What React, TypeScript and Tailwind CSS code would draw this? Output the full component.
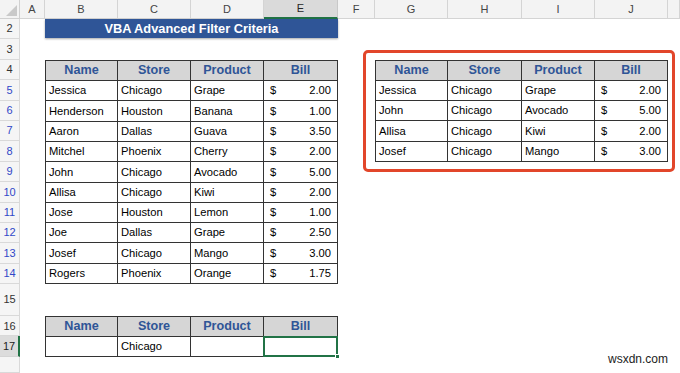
import React from "react";

const FONT = { fontFamily: '"Liberation Sans", Arial, sans-serif' };

const cols = ["A", "B", "C", "D", "E", "F", "G", "H", "I", "J", ""];

const data: [string, string, string, string][] = [
  ["Jessica", "Chicago", "Grape", "2.00"],
  ["Henderson", "Houston", "Banana", "1.00"],
  ["Aaron", "Dallas", "Guava", "3.50"],
  ["Mitchel", "Phoenix", "Cherry", "2.00"],
  ["John", "Chicago", "Avocado", "5.00"],
  ["Allisa", "Chicago", "Kiwi", "2.00"],
  ["Jose", "Houston", "Lemon", "1.00"],
  ["Joe", "Dallas", "Grape", "2.50"],
  ["Josef", "Chicago", "Mango", "3.00"],
  ["Rogers", "Phoenix", "Orange", "1.75"],
];

const filtered = data.filter((r) => r[1] === "Chicago");

function HeaderRow() {
  return (
    <>
      {["Name", "Store", "Product", "Bill"].map((h) => (
        <div
          key={h}
          className="border-r border-b border-[#333] bg-[#d6d6d6] flex items-center justify-center text-[12.6px] font-bold text-[#2f5597]"
        >
          {h}
        </div>
      ))}
    </>
  );
}

function DataRow({ r }: { r: [string, string, string, string] }) {
  return (
    <>
      <div className="border-r border-b border-[#333] flex items-center pl-[3px] text-[11.2px] text-black">{r[0]}</div>
      <div className="border-r border-b border-[#333] flex items-center pl-[3px] text-[11.2px] text-black">{r[1]}</div>
      <div className="border-r border-b border-[#333] flex items-center pl-[3px] text-[11.2px] text-black">{r[2]}</div>
      <div className="border-r border-b border-[#333] flex items-center justify-between pl-[6px] pr-[6px] text-[11.2px] text-black">
        <span>$</span>
        <span>{r[3]}</span>
      </div>
    </>
  );
}

export default function App() {
  const rowNums: { n: number; cls: string }[] = [];
  for (let n = 2; n <= 18; n++) {
    let color = "text-[#333]";
    if (n >= 5 && n <= 14) color = "text-[#3048c8]";
    rowNums.push({ n, cls: color });
  }

  return (
    <div
      className="w-[680px] h-[373px] overflow-hidden bg-white relative grid"
      style={{
        ...FONT,
        gridTemplateColumns: "20px 25px 73px 73px 73px 74px 37px 73px 74px 73px 73px 1fr",
        gridTemplateRows: "19px repeat(13, 20.4px) 32px 20.4px 20.4px 1fr",
      }}
    >
      {/* corner */}
      <div className="col-start-1 row-start-1 bg-[#f3f3f3] border-r border-b border-[#d0d0d0] relative">
        <div className="absolute right-[2px] bottom-[2px] w-0 h-0 border-l-[11px] border-l-transparent border-b-[11px] border-b-[#c9c9c9]" />
      </div>
      {/* column headers */}
      {cols.map((c, i) => (
        <div
          key={i}
          className={
            c === "E"
              ? "row-start-1 bg-[#dadada] border-r border-[#c8c8c8] border-b-2 border-b-[#217346] flex items-center justify-center text-[11px] text-[#262626]"
              : "row-start-1 bg-[#f3f3f3] border-r border-b border-[#d4d4d4] flex items-center justify-center text-[11px] text-[#444]"
          }
          style={{ gridColumnStart: i + 2 }}
        >
          {c}
        </div>
      ))}
      {/* row headers */}
      {rowNums.map(({ n, cls }) => (
        <div
          key={n}
          className={
            n === 17
              ? "col-start-1 bg-[#dcdcdc] border-r-2 border-r-[#217346] border-b border-b-[#d4d4d4] flex items-center justify-center text-[11px] text-[#222]"
              : `col-start-1 bg-[#f5f5f5] border-r border-b border-[#d9d9d9] flex items-center justify-center text-[11px] ${cls}`
          }
          style={{ gridRowStart: n }}
        >
          {n === 18 ? "" : n}
        </div>
      ))}

      {/* title */}
      <div className="col-start-3 col-span-4 row-start-2 mb-[1px] bg-[#2f5597] shadow-[0_1px_2px_rgba(0,0,0,0.35)] flex items-center justify-center text-white font-bold text-[12.8px]">
        VBA Advanced Filter Criteria
      </div>

      {/* main table */}
      <div className="col-start-3 col-span-4 row-start-4 row-span-11 border-l border-t border-[#333] grid grid-cols-[72px_73px_73px_74px] grid-rows-[repeat(11,1fr)]">
        <HeaderRow />
        {data.map((r, i) => (
          <DataRow key={i} r={r} />
        ))}
      </div>

      {/* criteria table */}
      <div className="col-start-3 col-span-4 row-start-16 row-span-2 border-l border-t border-[#333] grid grid-cols-[72px_73px_73px_74px] grid-rows-[repeat(2,1fr)]">
        <HeaderRow />
        <div className="border-r border-b border-[#333]" />
        <div className="border-r border-b border-[#333] flex items-center pl-[3px] text-[11.2px] text-black">Chicago</div>
        <div className="border-r border-b border-[#333]" />
        <div className="relative border-2 border-[#217346] -ml-px -mt-px">
          <div className="absolute -right-[4px] -bottom-[4px] w-[5px] h-[5px] bg-[#217346] border border-white" />
        </div>
      </div>

      {/* result table with red frame */}
      <div className="col-start-8 col-span-4 row-start-4 row-span-5 relative">
        <div className="absolute -left-[12px] -right-[7px] -top-[10px] -bottom-[10px] border-[3px] border-[#e2462a] rounded-[5px]" />
        <div className="w-full h-full border-l border-t border-[#333] grid grid-cols-[72px_74px_73px_73px] grid-rows-[repeat(5,1fr)]">
          <HeaderRow />
          {filtered.map((r, i) => (
            <DataRow key={i} r={r} />
          ))}
        </div>
      </div>

      {/* watermark */}
      <div className="absolute right-[12px] bottom-[5px] text-[12px] text-[#222]">wsxdn.com</div>
    </div>
  );
}
